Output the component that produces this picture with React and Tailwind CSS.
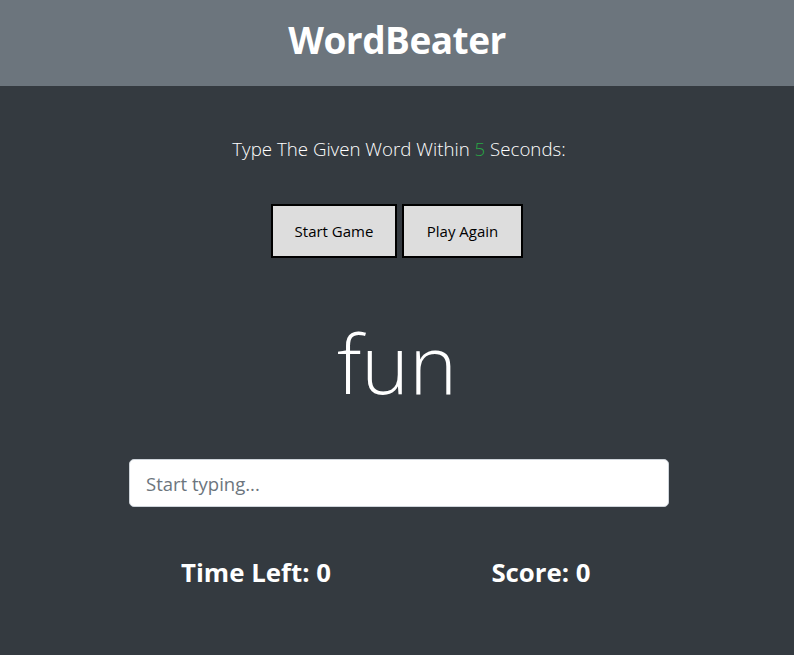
export default function App() {
  const font = { fontFamily: '"Open Sans", "Noto Sans", sans-serif' };
  return (
    <div className="min-h-[655px] bg-[#343a40] text-white" style={font}>
      <header className="h-[86px] bg-[#6c757d] flex items-center justify-center pb-[7px]">
        <h1 className="text-[37px] font-bold leading-none tracking-[-0.5px]">WordBeater</h1>
      </header>
      <div className="flex flex-col items-center">
        <p className="mt-[49px] ml-[4px] text-[18.7px] font-light leading-[28px] text-white">
          Type The Given Word Within <span className="text-[#28a745]">5</span> Seconds:
        </p>
        <div className="mt-[41px] flex gap-[5px]">
          <button className="w-[126px] h-[54px] bg-[#dddddd] border-2 border-black text-black text-[15px]">Start Game</button>
          <button className="w-[121px] h-[54px] bg-[#dddddd] border-2 border-black text-black text-[15px]">Play Again</button>
        </div>
        <div className="mt-[42px] h-[124px] flex items-center justify-center text-[81px] font-light leading-none">fun</div>
        <input
          className="mt-[35px] ml-[4px] w-[540px] h-[48px] bg-white rounded-[5px] border border-[#ced4da] px-4 text-[18.5px] text-[#495057] placeholder:text-[#6c757d] outline-none"
          placeholder="Start typing..."
        />
        <div className="mt-[49px] ml-[3px] flex w-[570px]">
          <div className="w-1/2 text-center text-[25.8px] font-bold leading-[32px]">Time Left: 0</div>
          <div className="w-1/2 text-center text-[25.8px] font-bold leading-[32px]">Score: 0</div>
        </div>
      </div>
    </div>
  );
}
